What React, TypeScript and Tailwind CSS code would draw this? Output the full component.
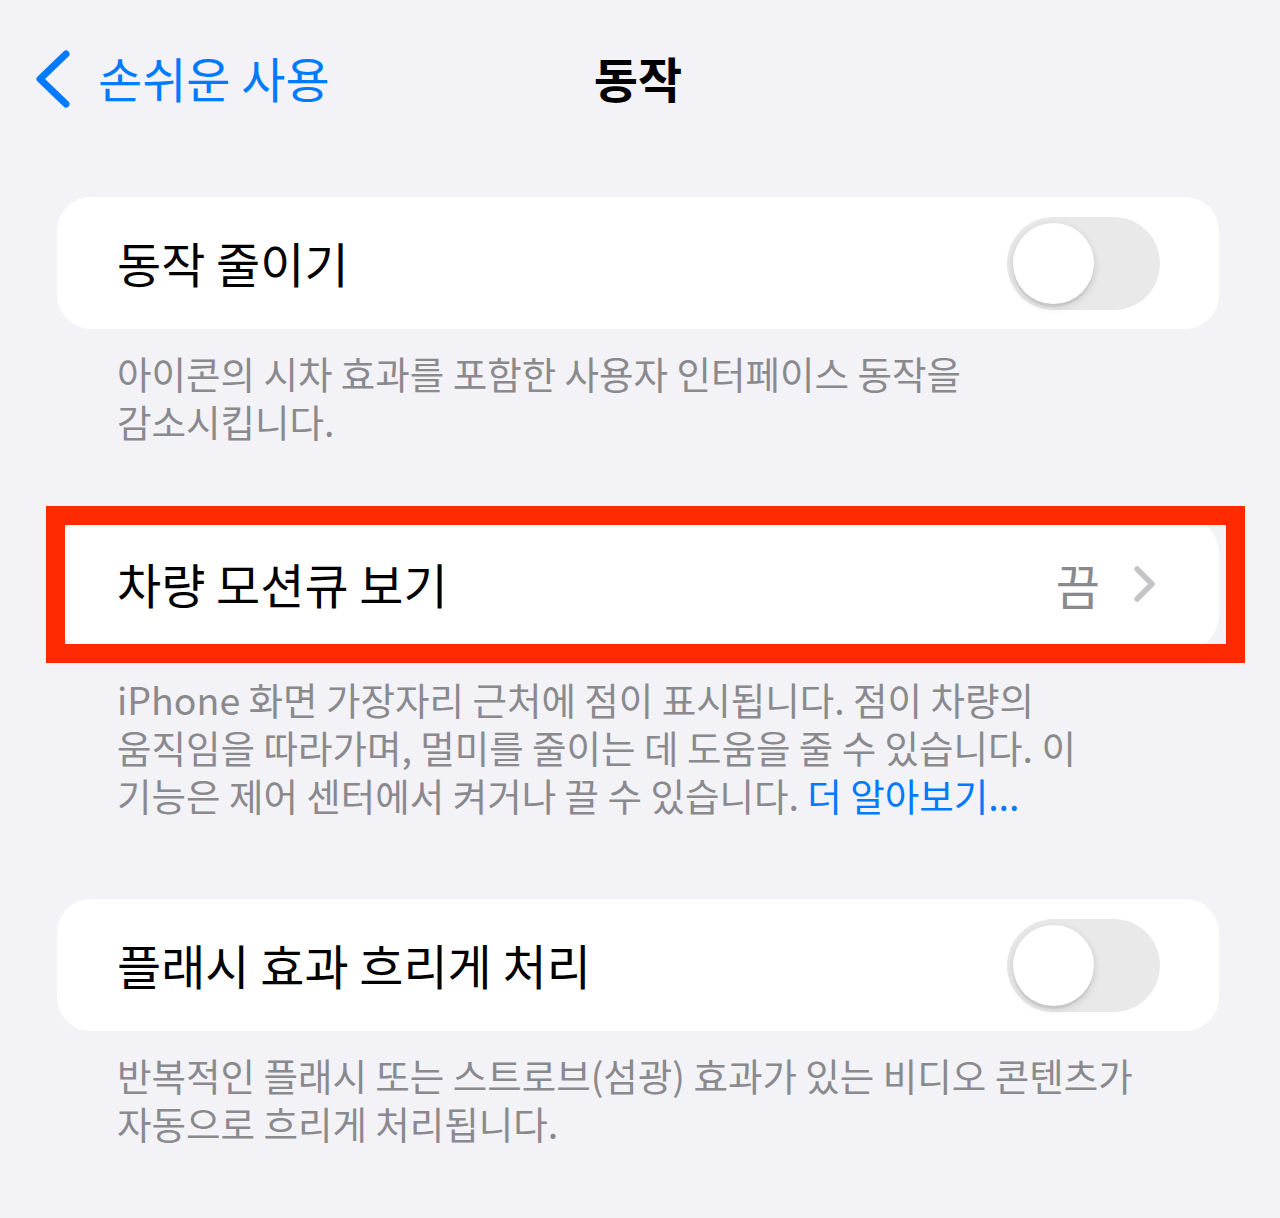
import React from "react";

const font = { fontFamily: '"Noto Sans CJK KR", "Noto Sans", sans-serif' };

function Toggle() {
  return (
    <div className="w-[153px] h-[93px] rounded-full bg-[#e9e9ea] p-[6px] flex items-center">
      <div className="w-[81px] h-[81px] rounded-full bg-white shadow-[0_3px_8px_rgba(0,0,0,0.15),0_3px_1px_rgba(0,0,0,0.06)]" />
    </div>
  );
}

function Footer({ children, className = "" }: { children: React.ReactNode; className?: string }) {
  return (
    <div className={"pl-[117px] text-[37.5px] leading-[48px] text-[#8a8a8e] whitespace-nowrap " + className}>
      {children}
    </div>
  );
}

export default function App() {
  return (
    <div className="w-[1280px] h-[1218px] bg-[#f2f2f7] overflow-hidden" style={font}>
      {/* Header */}
      <div className="relative h-[156px] flex items-start pt-[45px]">
        <div className="flex items-center pl-[34px] gap-[26px]">
          <svg width="38" height="60" viewBox="0 0 38 60" className="mt-[4px]">
            <path d="M32 5 L6 30 L32 55" fill="none" stroke="#007aff" strokeWidth="7" strokeLinecap="round" strokeLinejoin="round" />
          </svg>
          <span className="text-[#007aff] text-[48px] leading-[64px]">손쉬운 사용</span>
        </div>
        <div className="absolute left-0 right-0 top-[45px] text-center">
          <span className="text-black text-[48px] leading-[64px] font-bold pr-[4px]">동작</span>
        </div>
      </div>

      {/* Section 1 */}
      <div className="mt-[41px] ml-[57px] w-[1162px] h-[132px] bg-white rounded-[34px] flex items-center justify-between pl-[60px] pr-[59px]">
        <span className="text-[48px] text-black -mt-[3px]">동작 줄이기</span>
        <Toggle />
      </div>
      <Footer className="mt-[20px]">
        아이콘의 시차 효과를 포함한 사용자 인터페이스 동작을
        <br />
        감소시킵니다.
      </Footer>

      {/* Section 2 */}
      <div className="relative mt-[73px] ml-[57px] w-[1162px] h-[132px]">
        <div className="w-full h-full bg-white rounded-[34px] flex items-center justify-between pl-[60px] pr-[62px]">
          <span className="text-[48px] text-black -mt-[2px]">차량 모션큐 보기</span>
          <div className="flex items-center gap-[33px]">
            <span className="text-[48px] text-[#8a8a8e]">끔</span>
            <svg width="24" height="38" viewBox="0 0 24 38">
              <path d="M4 4 L19 19 L4 34" fill="none" stroke="#c4c4c7" strokeWidth="5.5" strokeLinecap="round" strokeLinejoin="round" />
            </svg>
          </div>
        </div>
        <div className="absolute left-[-11px] top-[-12px] w-[1199px] h-[157px] border-[19px] border-[#ff2a00]" />
      </div>
      <Footer className="mt-[25px]">
        iPhone 화면 가장자리 근처에 점이 표시됩니다. 점이 차량의
        <br />
        움직임을 따라가며, 멀미를 줄이는 데 도움을 줄 수 있습니다. 이
        <br />
        기능은 제어 센터에서 켜거나 끌 수 있습니다. <span className="text-[#007aff]">더 알아보기...</span>
      </Footer>

      {/* Section 3 */}
      <div className="mt-[80px] ml-[57px] w-[1162px] h-[132px] bg-white rounded-[34px] flex items-center justify-between pl-[60px] pr-[59px]">
        <span className="text-[48px] text-black -mt-[3px]">플래시 효과 흐리게 처리</span>
        <Toggle />
      </div>
      <Footer className="mt-[20px]">
        반복적인 플래시 또는 스트로브(섬광) 효과가 있는 비디오 콘텐츠가
        <br />
        자동으로 흐리게 처리됩니다.
      </Footer>
    </div>
  );
}
